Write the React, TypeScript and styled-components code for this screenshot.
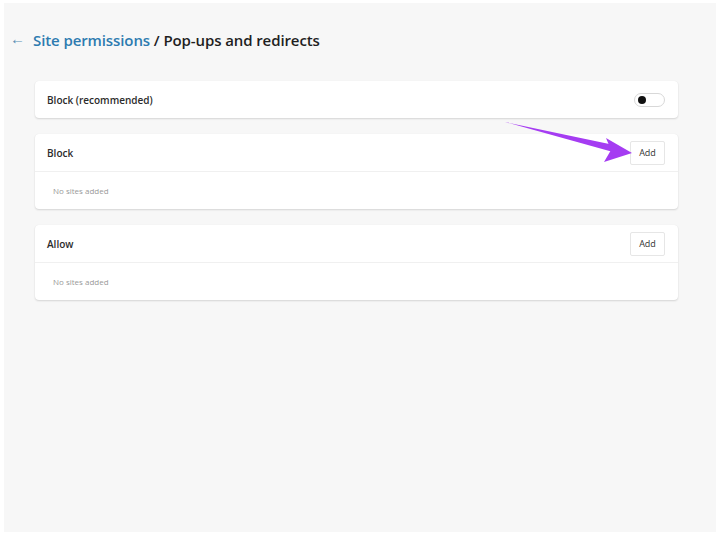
import React from "react";
import styled, { createGlobalStyle } from "styled-components";

const Global = createGlobalStyle`
  html, body { margin: 0; padding: 0; background: #ffffff; }
  body { font-family: "Open Sans", "Noto Sans", sans-serif; color: #1f1f1f; }
`;

const Panel = styled.div`
  margin: 3px 4px 0 4px;
  height: 529px;
  background: #f7f7f7;
  box-sizing: border-box;
  padding: 27px 0 0 6px;
  position: relative;
`;

const Header = styled.div`
  display: flex;
  align-items: center;
  height: 20px;
  gap: 9px;
`;

const Back = styled.span`
  font-size: 15px;
  color: #5a8fb5;
  width: 14px;
  text-align: center;
  margin-top: -4px;
`;

const Title = styled.h1`
  margin: 0;
  font-size: 15px;
  font-weight: 600;
  letter-spacing: -0.1px;
  color: #1f1f1f;
`;

const Crumb = styled.span`
  color: #2d7bb0;
`;

const Cards = styled.div`
  display: flex;
  flex-direction: column;
  gap: 16px;
  margin: 31px 0 0 25px;
  width: 643px;
`;

const Card = styled.div`
  background: #ffffff;
  border-radius: 4px;
  box-shadow: 0 1px 2px rgba(0, 0, 0, 0.14), 0 0 1px rgba(0, 0, 0, 0.06);
`;

const Row = styled.div<{ $h: number }>`
  display: flex;
  align-items: center;
  justify-content: space-between;
  height: ${(p) => p.$h}px;
  padding: 0 13px 0 12px;
  & + & { border-top: 1px solid #f0f0f0; }
`;

const Label = styled.span`
  font-size: 10px;
  font-weight: 600;
  color: #2b2b2b;
`;

const Empty = styled.span`
  font-size: 8px;
  color: #999999;
  padding-left: 6px;
`;

const Toggle = styled.div`
  width: 31px;
  height: 14px;
  border: 1px solid #d8d8d8;
  border-radius: 8px;
  display: flex;
  align-items: center;
  padding: 0 3px;
  box-sizing: border-box;
  &::before {
    content: "";
    width: 8px;
    height: 8px;
    border-radius: 50%;
    background: #111;
  }
`;

const AddButton = styled.button`
  font-family: inherit;
  font-size: 9px;
  color: #333;
  background: #fff;
  border: 1px solid #e6e6e6;
  border-radius: 2px;
  width: 35px;
  height: 24px;
  padding: 0;
  cursor: pointer;
`;

const Pointer = styled.svg`
  position: absolute;
  left: -4px;
  top: -3px;
  pointer-events: none;
`;

const ListCard = ({ title }: { title: string }) => (
  <Card>
    <Row $h={37}>
      <Label>{title}</Label>
      <AddButton>Add</AddButton>
    </Row>
    <Row $h={37}>
      <Empty>No sites added</Empty>
    </Row>
  </Card>
);

export default function App() {
  return (
    <>
      <Global />
      <Panel>
        <Header>
          <Back>←</Back>
          <Title>
            <Crumb>Site permissions</Crumb> / Pop-ups and redirects
          </Title>
        </Header>
        <Cards>
          <Card>
            <Row $h={37}>
              <Label>Block (recommended)</Label>
              <Toggle />
            </Row>
          </Card>
          <ListCard title="Block" />
          <ListCard title="Allow" />
        </Cards>
        <Pointer width="720" height="535" viewBox="0 0 720 535">
          <path d="M505 122 L614 145 L613 152 Z" fill="#a53cf2" />
          <path d="M606 138 L632 153 L604 162 L611 150 Z" fill="#a53cf2" />
        </Pointer>
      </Panel>
    </>
  );
}
